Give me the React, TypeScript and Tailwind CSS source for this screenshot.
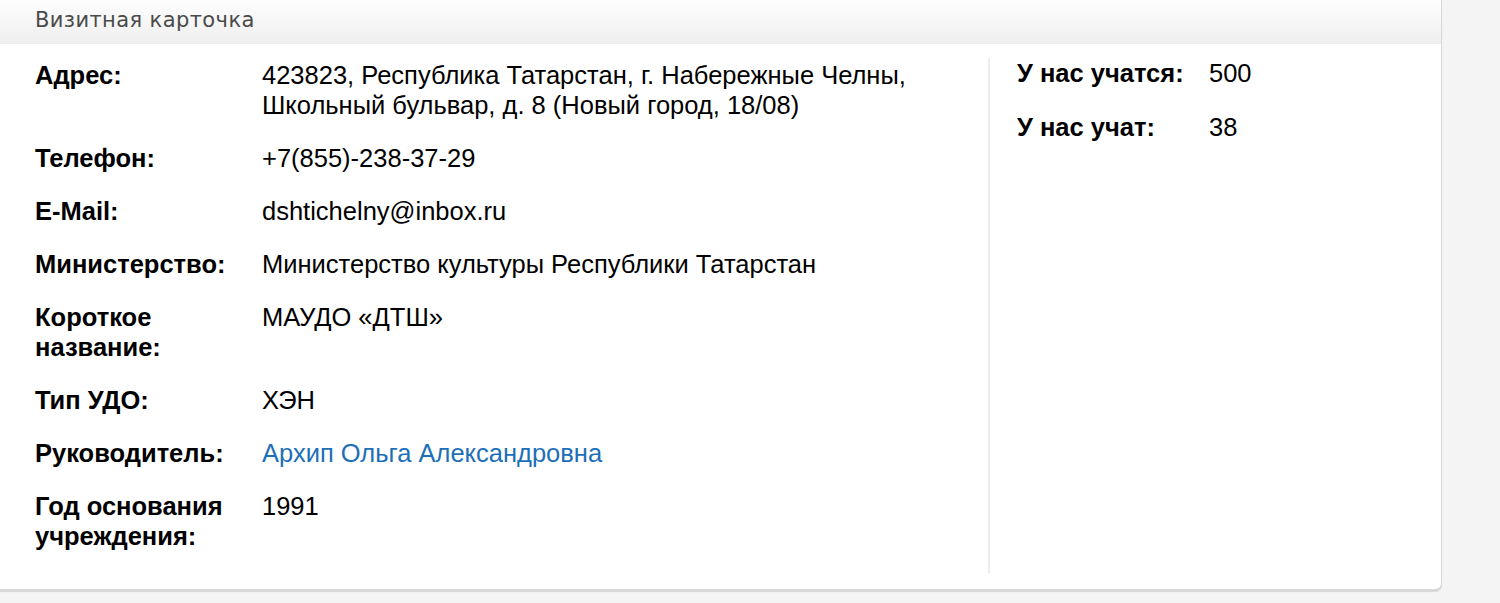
const rows: { label: string; value: string; link?: boolean }[] = [
  {
    label: "Адрес:",
    value: "423823, Республика Татарстан, г. Набережные Челны, Школьный бульвар, д. 8 (Новый город, 18/08)",
  },
  { label: "Телефон:", value: "+7(855)-238-37-29" },
  { label: "E-Mail:", value: "dshtichelny@inbox.ru" },
  { label: "Министерство:", value: "Министерство культуры Республики Татарстан" },
  { label: "Короткое название:", value: "МАУДО «ДТШ»" },
  { label: "Тип УДО:", value: "ХЭН" },
  { label: "Руководитель:", value: "Архип Ольга Александровна", link: true },
  { label: "Год основания учреждения:", value: "1991" },
];

const stats = [
  { label: "У нас учатся:", value: "500" },
  { label: "У нас учат:", value: "38" },
];

export default function App() {
  return (
    <div className="h-[603px] w-[1500px] overflow-hidden bg-[#f4f4f4] font-['Liberation_Sans',Arial,sans-serif] text-black">
      <div className="-ml-[8px] -mt-[6px] w-[1450px] rounded-[7px] border border-[#d9d9d9] bg-white shadow-[0_2px_1px_rgba(0,0,0,0.12)]">
        <div className="h-[49px] rounded-t-[7px] border-b border-[#ececec] bg-gradient-to-b from-white to-[#efefef] pl-[42px] pt-[10px]">
          <span className="font-['DejaVu_Sans',sans-serif] text-[21px] leading-[30px] tracking-[0.4px] text-[#4a4a4a]">Визитная карточка</span>
        </div>

        <div className="flex pb-[16px] pt-[16px]">
          <div className="flex w-[995px] flex-col gap-[23px] pb-[22px] pl-[42px]">
            {rows.map((r) => (
              <div key={r.label} className="flex text-[25.5px] leading-[30px]">
                <div className="w-[227px] shrink-0 pr-[27px] font-bold">{r.label}</div>
                <div className={r.link ? "w-[680px] text-[#1d6fb8]" : "w-[680px]"}>{r.value}</div>
              </div>
            ))}
          </div>

          <div className="-mt-[2px] flex flex-1 flex-col gap-[24px] border-l-2 border-[#ececec] pl-[27px]">
            {stats.map((s) => (
              <div key={s.label} className="flex text-[25.5px] leading-[30px]">
                <div className="w-[192px] shrink-0 font-bold">{s.label}</div>
                <div>{s.value}</div>
              </div>
            ))}
          </div>
        </div>
      </div>
    </div>
  );
}
